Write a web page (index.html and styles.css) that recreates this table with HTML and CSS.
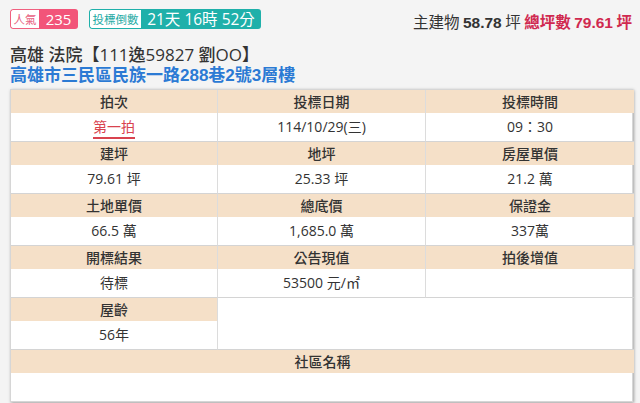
FILE: index.html
```html
<!DOCTYPE html>
<html lang="zh-Hant">
<head>
<meta charset="utf-8">
<link rel="stylesheet" href="styles.css">
</head>
<body>
<div class="page">
  <div class="topbar">
    <div class="badges">
      <span class="badge pink"><span class="lbl">人氣</span><span class="val">235</span></span>
      <span class="badge teal"><span class="lbl">投標倒數</span><span class="val">21天 16時 52分</span></span>
    </div>
    <div class="area">主建物 <b class="num">58.78</b> 坪 <span class="total">總坪數 <b class="num">79.61</b> 坪</span></div>
  </div>
  <h1 class="title">高雄 法院【111逸59827 劉OO】</h1>
  <div class="addr">高雄市三民區民族一路288巷2號3層樓</div>
  <div class="table">
    <div class="cell"><div class="th">拍次</div><div class="td"><span class="round">第一拍</span></div></div>
    <div class="cell"><div class="th">投標日期</div><div class="td">114/10/29(三)</div></div>
    <div class="cell last"><div class="th">投標時間</div><div class="td">09：30</div></div>
    <div class="cell"><div class="th">建坪</div><div class="td">79.61 坪</div></div>
    <div class="cell"><div class="th">地坪</div><div class="td">25.33 坪</div></div>
    <div class="cell last"><div class="th">房屋單價</div><div class="td">21.2 萬</div></div>
    <div class="cell"><div class="th">土地單價</div><div class="td">66.5 萬</div></div>
    <div class="cell"><div class="th">總底價</div><div class="td">1,685.0 萬</div></div>
    <div class="cell last"><div class="th">保證金</div><div class="td">337萬</div></div>
    <div class="cell"><div class="th">開標結果</div><div class="td">待標</div></div>
    <div class="cell"><div class="th">公告現值</div><div class="td">53500 元/㎡</div></div>
    <div class="cell last"><div class="th">拍後增值</div><div class="td"></div></div>
    <div class="cell"><div class="th">屋齡</div><div class="td">56年</div></div>
    <div class="cell last span2"></div>
    <div class="cell last span3 bottom"><div class="th">社區名稱</div><div class="td"></div></div>
  </div>
</div>
</body>
</html>
```
FILE: styles.css
```css
* { box-sizing: border-box; }
html, body { margin: 0; padding: 0; background: #f4f4f4; }
body {
  font-family: "Noto Sans CJK TC", "Noto Sans", sans-serif;
  color: #333;
  width: 640px;
  height: 403px;
  overflow: hidden;
}
.page { padding: 9px 8px 0 10px; }
.topbar { display: flex; justify-content: space-between; align-items: center; height: 20px; }
.badges { display: flex; gap: 11px; }
.badge { display: flex; height: 20px; border-radius: 3px; overflow: hidden; white-space: nowrap; }
.badge .lbl {
  background: #fff; font-size: 11.5px; line-height: 18px; padding: 0;
  border: 1px solid; border-right: 0; border-radius: 3px 0 0 3px; text-align: center;
}
.badge .val { color: #fff; font-size: 15px; line-height: 20px; font-family: "Open Sans", "Noto Sans CJK TC", sans-serif; text-align: center; }
.pink .lbl { color: #e8607e; border-color: #f0607f; width: 29px; }
.pink .val { background: #f25479; width: 39px; }
.teal .lbl { color: #1aa9a3; border-color: #1fb0aa; width: 52px; }
.teal .val { background: #1fb0aa; font-size: 15.5px; width: 120px; }
.area { font-size: 15.5px; color: #333; padding-top: 3px; }
.area .num { font-family: "Liberation Sans", Arial, sans-serif; font-weight: bold; font-size: 15.5px; }
.total { color: #d0294f; font-weight: bold; }
.title {
  margin: 15px 0 0; font-size: 17px; font-weight: 500; line-height: 21px; color: #333;
  font-family: "Open Sans", "Noto Sans CJK TC", sans-serif;
}
.addr {
  font-size: 17px; line-height: 21px; color: #2b7ad4; font-weight: bold;
  font-family: "Liberation Sans", "Noto Sans CJK TC", sans-serif;
}
.table {
  margin-top: 3px;
  width: 623px;
  display: grid;
  grid-template-columns: 207px 208px 208px;
  background: #fff;
  border: 1px solid #d6d6d6;
  box-shadow: 1px 1px 3px rgba(0,0,0,0.35);
}
.cell { border-right: 1px solid #dcdcdc; border-bottom: 1px solid #d4d4d4; }
.cell.last { border-right: 0; }
.cell.bottom { border-bottom: 0; }
.span2 { grid-column: span 2; }
.span3 { grid-column: span 3; }
.th {
  background: #f5e0c8; height: 23px; line-height: 23px; text-align: center;
  font-size: 14px; font-weight: 500; color: #333;
}
.td {
  height: 28px; line-height: 28px; text-align: center; font-size: 14px; color: #333;
  font-family: "Open Sans", "Noto Sans CJK TC", sans-serif;
}
.round { color: #d9434f; border-bottom: 2px solid #d9434f; padding-bottom: 1px; }
```
